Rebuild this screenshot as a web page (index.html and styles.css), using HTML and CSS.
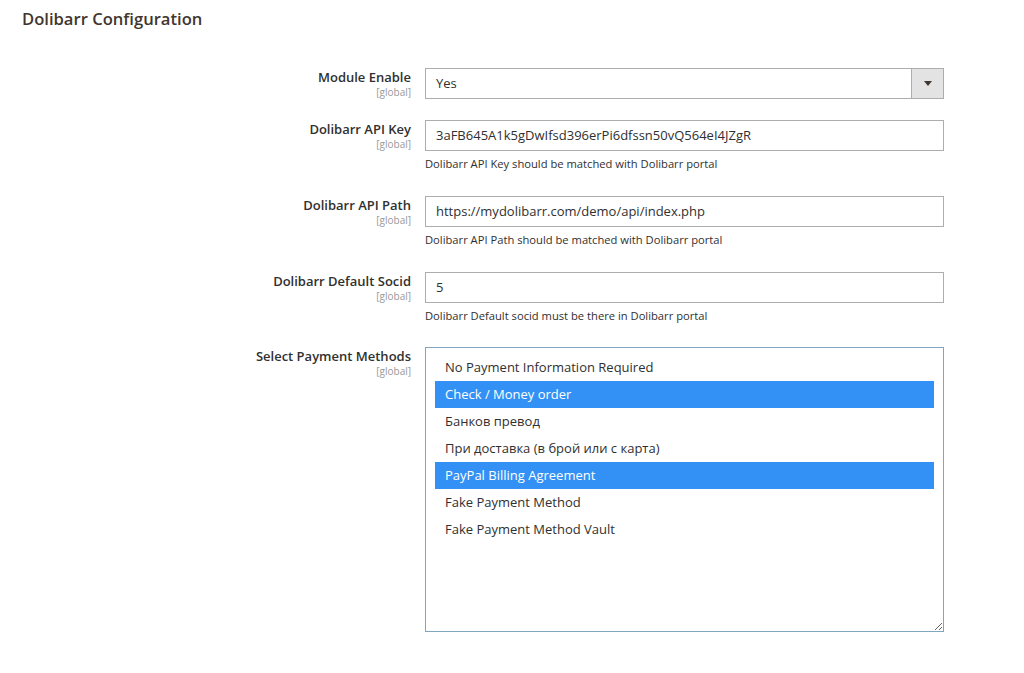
FILE: index.html
```html
<!DOCTYPE html>
<html>
<head>
<meta charset="utf-8">
<link rel="stylesheet" href="styles.css">
</head>
<body>
<div class="page">
  <h2 class="title">Dolibarr Configuration</h2>
  <div class="form">
    <div class="row">
      <div class="label"><span class="name">Module Enable</span><span class="scope">[global]</span></div>
      <div class="control">
        <div class="select">
          <span class="select-value">Yes</span>
          <span class="select-btn"><span class="arrow"></span></span>
        </div>
      </div>
    </div>
    <div class="row">
      <div class="label"><span class="name">Dolibarr API Key</span><span class="scope">[global]</span></div>
      <div class="control">
        <div class="input">3aFB645A1k5gDwIfsd396erPi6dfssn50vQ564eI4JZgR</div>
        <div class="note">Dolibarr API Key should be matched with Dolibarr portal</div>
      </div>
    </div>
    <div class="row">
      <div class="label"><span class="name">Dolibarr API Path</span><span class="scope">[global]</span></div>
      <div class="control">
        <div class="input">https://mydolibarr.com/demo/api/index.php</div>
        <div class="note">Dolibarr API Path should be matched with Dolibarr portal</div>
      </div>
    </div>
    <div class="row">
      <div class="label"><span class="name">Dolibarr Default Socid</span><span class="scope">[global]</span></div>
      <div class="control">
        <div class="input">5</div>
        <div class="note">Dolibarr Default socid must be there in Dolibarr portal</div>
      </div>
    </div>
    <div class="row row-multi">
      <div class="label"><span class="name">Select Payment Methods</span><span class="scope">[global]</span></div>
      <div class="control">
        <div class="multiselect">
          <div class="option">No Payment Information Required</div>
          <div class="option selected">Check / Money order</div>
          <div class="option">Банков превод</div>
          <div class="option">При доставка (в брой или с карта)</div>
          <div class="option selected">PayPal Billing Agreement</div>
          <div class="option">Fake Payment Method</div>
          <div class="option">Fake Payment Method Vault</div>
        </div>
      </div>
    </div>
  </div>
</div>
</body>
</html>
```

FILE: styles.css
```css
html, body {
  margin: 0;
  padding: 0;
  background: #ffffff;
}
body {
  font-family: "Open Sans", "Noto Sans", sans-serif;
  color: #303030;
}
.page {
  padding: 8px 0 0 22px;
}
.title {
  margin: 0;
  font-size: 16.6px;
  font-weight: 600;
  line-height: 22px;
  color: #41362f;
}
.form {
  margin-top: 38px;
}
.row {
  display: flex;
  gap: 14px;
  margin-bottom: 21px;
}
.row-multi {
  margin-top: -1px;
}
.label {
  width: 389px;
  display: flex;
  flex-direction: column;
  align-items: flex-end;
  text-align: right;
}
.name {
  font-size: 13px;
  font-weight: 600;
  line-height: 18px;
  color: #303030;
}
.scope {
  font-size: 10px;
  line-height: 12px;
  color: #999999;
}
.control {
  width: 519px;
}
.select {
  box-sizing: border-box;
  height: 31px;
  border: 1px solid #adadad;
  display: flex;
  align-items: stretch;
}
.select-value {
  flex: 1;
  font-size: 13px;
  line-height: 29px;
  padding-left: 10px;
}
.select-btn {
  width: 31px;
  background: #e3e3e3;
  border-left: 1px solid #adadad;
  display: flex;
  align-items: center;
  justify-content: center;
}
.arrow {
  width: 0;
  height: 0;
  border-left: 4px solid transparent;
  border-right: 4px solid transparent;
  border-top: 5px solid #41362f;
}
.input {
  box-sizing: border-box;
  height: 31px;
  border: 1px solid #adadad;
  font-size: 13px;
  line-height: 29px;
  padding-left: 10px;
}
.note {
  margin-top: 5px;
  margin-bottom: 4px;
  font-size: 11.2px;
  line-height: 15px;
  color: #303030;
}
.multiselect {
  box-sizing: border-box;
  height: 285px;
  border: 1px solid #7fa6bd;
  padding: 6px 9px;
  resize: vertical;
  overflow: auto;
}
.option {
  font-size: 13px;
  line-height: 27px;
  padding-left: 10px;
}
.option.selected {
  background: #3391f5;
  color: #ffffff;
}
```
